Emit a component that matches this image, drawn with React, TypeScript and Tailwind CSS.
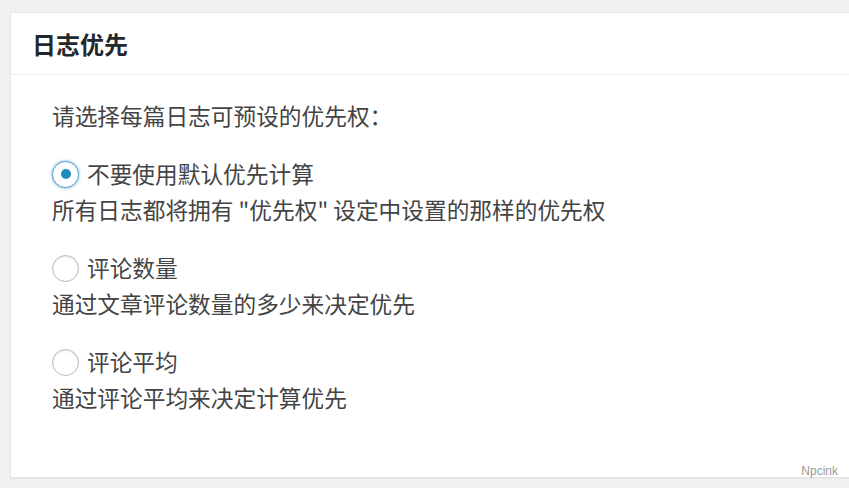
const font = { fontFamily: '"Noto Sans CJK SC", "Noto Sans", "Liberation Sans", sans-serif' };

type Option = { label: string; desc: string; checked?: boolean };

const options: Option[] = [
  { label: "不要使用默认优先计算", desc: '所有日志都将拥有 "优先权" 设定中设置的那样的优先权', checked: true },
  { label: "评论数量", desc: "通过文章评论数量的多少来决定优先" },
  { label: "评论平均", desc: "通过评论平均来决定计算优先" },
];

function Radio({ checked }: { checked?: boolean }) {
  return checked ? (
    <span className="w-[27px] h-[27px] rounded-full border border-[#5b9dd9] bg-white shadow-[0_0_3px_rgba(30,140,190,0.7)] flex items-center justify-center shrink-0">
      <span className="w-[10px] h-[10px] rounded-full bg-[#1e8cbe]" />
    </span>
  ) : (
    <span className="w-[27px] h-[27px] rounded-full border border-[#b4b9be] bg-white shadow-[inset_0_1px_2px_rgba(0,0,0,0.1)] shrink-0" />
  );
}

export default function App() {
  return (
    <div className="relative w-[849px] h-[488px] bg-[#f1f1f1] pt-[12px] pl-[10px] pb-[10px] overflow-hidden" style={font}>
      {/* Card */}
      <div className="h-full w-[850px] bg-white border border-[#e5e5e5] shadow-[0_1px_1px_rgba(0,0,0,0.04)] flex flex-col">
        <div className="h-[62px] border-b border-[#eeeeee] flex items-center pl-[21px]">
          <h2 className="text-[24px] font-bold text-[#23282d] leading-none">日志优先</h2>
        </div>
        <div className="pl-[41px] pt-[23px] text-[22.7px] leading-[36px] text-[#444]">
          <p>请选择每篇日志可预设的优先权：</p>
          {options.map((o) => (
            <div key={o.label} className="mt-[22px]">
              <label className="flex items-center gap-[8px]">
                <Radio checked={o.checked} />
                <span>{o.label}</span>
              </label>
              <p>{o.desc}</p>
            </div>
          ))}
        </div>
      </div>
      {/* Watermark */}
      <span className="absolute right-[11px] bottom-[11px] text-[12px] text-[#999] leading-none" style={{ fontFamily: '"Liberation Sans", sans-serif' }}>
        Npcink
      </span>
    </div>
  );
}
